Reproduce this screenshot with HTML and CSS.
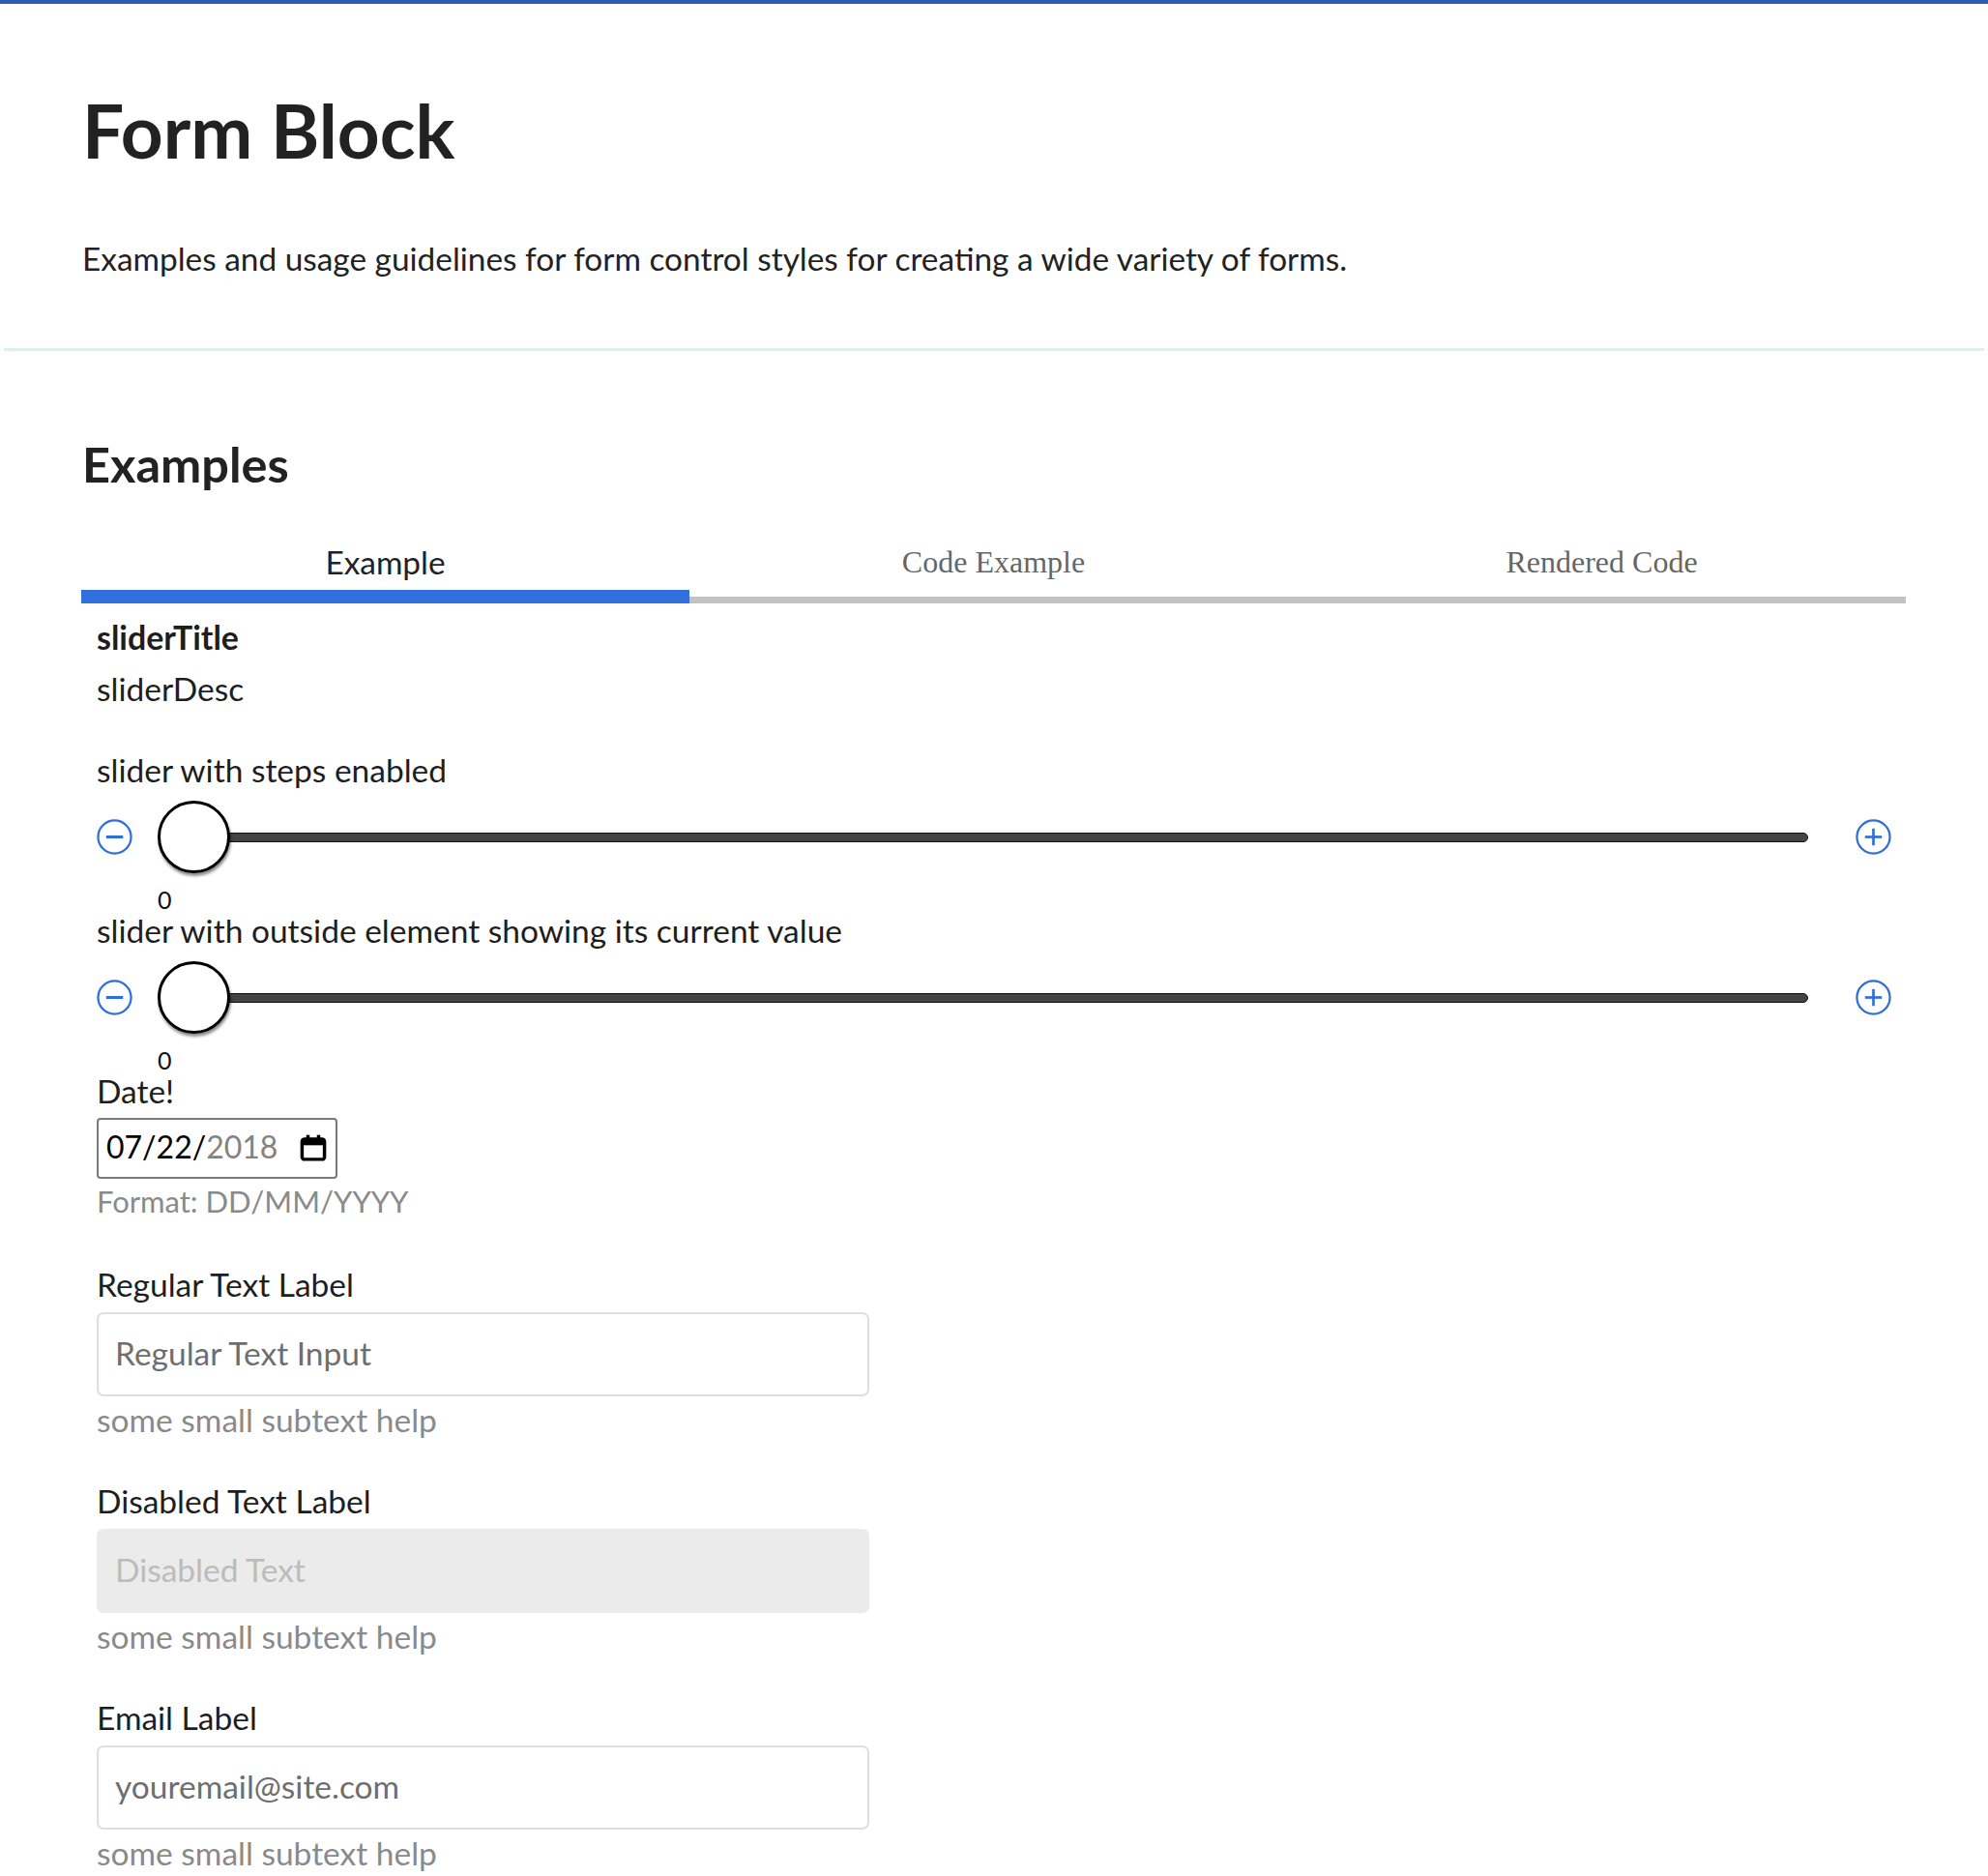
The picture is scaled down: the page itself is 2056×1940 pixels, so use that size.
FILE: index.html
```html
<!DOCTYPE html>
<html lang="en">
<head>
<meta charset="utf-8">
<title>Form Block</title>
<link rel="stylesheet" href="styles.css">
</head>
<body>
<header class="page-header">
  <h1 class="page-title">Form Block</h1>
  <p class="page-lead">Examples and usage guidelines for form control styles for creating a wide variety of forms.</p>
</header>
<hr class="divider">
<main class="content">
  <h2 class="section-title">Examples</h2>
  <nav class="tabs">
    <div class="tab tab-active">Example</div>
    <div class="tab tab-serif">Code Example</div>
    <div class="tab tab-serif">Rendered Code</div>
  </nav>
  <section class="panel">
    <div class="slider-title">sliderTitle</div>
    <div class="slider-desc">sliderDesc</div>

    <div class="field-label slider-label">slider with steps enabled</div>
    <div class="slider-row">
      <svg class="step-icon" viewBox="0 0 36 36"><circle cx="18" cy="18" r="16.6" fill="none" stroke="#2f6fdb" stroke-width="2.2"/><line x1="9.5" y1="18" x2="26.5" y2="18" stroke="#2f6fdb" stroke-width="3"/></svg>
      <div class="slider">
        <div class="thumb"></div>
        <div class="track"></div>
      </div>
      <svg class="step-icon" viewBox="0 0 36 36"><circle cx="18" cy="18" r="16.6" fill="none" stroke="#2f6fdb" stroke-width="2.2"/><line x1="9.5" y1="18" x2="26.5" y2="18" stroke="#2f6fdb" stroke-width="2.6"/><line x1="18" y1="9.5" x2="18" y2="26.5" stroke="#2f6fdb" stroke-width="2.6"/></svg>
    </div>
    <div class="slider-value">0</div>

    <div class="field-label">slider with outside element showing its current value</div>
    <div class="slider-row">
      <svg class="step-icon" viewBox="0 0 36 36"><circle cx="18" cy="18" r="16.6" fill="none" stroke="#2f6fdb" stroke-width="2.2"/><line x1="9.5" y1="18" x2="26.5" y2="18" stroke="#2f6fdb" stroke-width="3"/></svg>
      <div class="slider">
        <div class="thumb"></div>
        <div class="track"></div>
      </div>
      <svg class="step-icon" viewBox="0 0 36 36"><circle cx="18" cy="18" r="16.6" fill="none" stroke="#2f6fdb" stroke-width="2.2"/><line x1="9.5" y1="18" x2="26.5" y2="18" stroke="#2f6fdb" stroke-width="2.6"/><line x1="18" y1="9.5" x2="18" y2="26.5" stroke="#2f6fdb" stroke-width="2.6"/></svg>
    </div>
    <div class="slider-value">0</div>

    <div class="field-label">Date!</div>
    <div class="date-input">
      <span class="date-text"><span class="date-set">07/22/</span><span class="date-unset">2018</span></span>
      <svg class="cal-icon" viewBox="0 0 24 24"><rect x="3.3" y="5.3" width="17.4" height="15.6" rx="1.8" fill="none" stroke="#000" stroke-width="2.6"/><rect x="3" y="5" width="18" height="5" fill="#000"/><rect x="6.6" y="2" width="2.6" height="4" fill="#000"/><rect x="14.8" y="2" width="2.6" height="4" fill="#000"/></svg>
    </div>
    <div class="help-text format-text">Format: DD/MM/YYYY</div>

    <div class="form-group">
      <div class="field-label">Regular Text Label</div>
      <div class="text-input"><span class="placeholder">Regular Text Input</span></div>
      <div class="help-text">some small subtext help</div>
    </div>

    <div class="form-group">
      <div class="field-label">Disabled Text Label</div>
      <div class="text-input text-input-disabled"><span class="placeholder">Disabled Text</span></div>
      <div class="help-text">some small subtext help</div>
    </div>

    <div class="form-group">
      <div class="field-label">Email Label</div>
      <div class="text-input"><span class="placeholder">youremail@site.com</span></div>
      <div class="help-text">some small subtext help</div>
    </div>
  </section>
</main>
</body>
</html>
```
FILE: styles.css
```css
* { box-sizing: border-box; }

body {
  margin: 0;
  border-top: 4px solid #2b5eb3;
  font-family: "Lato", "Noto Sans", sans-serif;
  color: #222;
  background: #fff;
}

.page-header {
  padding: 85px 85px 0 85px;
}

.page-title {
  margin: 0;
  font-size: 76.5px;
  line-height: 90px;
  font-weight: 700;
  color: #222;
}

.page-lead {
  margin: 66px 0 0 0;
  font-size: 33.4px;
  line-height: 44px;
  color: #222;
}

.divider {
  margin: 71px 4px 0 4px;
  border: 0;
  height: 3px;
  background: #dcefed;
}

.content {
  padding: 0 85px 0 84px;
}

.section-title {
  margin: 87px 0 0 1px;
  font-size: 50.5px;
  line-height: 60px;
  font-weight: 700;
  color: #222;
}

.tabs {
  display: flex;
  margin-top: 51px;
}

.tab {
  flex: 1;
  text-align: center;
  font-size: 33.4px;
  line-height: 40px;
  padding-bottom: 16px;
  border-bottom: 7px solid #c2c2c2;
  color: #222;
}

.tab-active {
  padding-bottom: 9px;
  border-bottom: 14px solid #3170dc;
}

.tab-serif {
  font-family: "Liberation Serif", serif;
  font-size: 32px;
  color: #666;
}

.panel {
  padding: 15px 15px 0 16px;
  font-size: 33.5px;
  line-height: 40px;
  color: #1e1e1e;
}

.slider-title {
  font-weight: 700;
  font-size: 33.9px;
}

.slider-desc {
  margin-top: 13px;
}

.slider-label {
  margin-top: 44px;
}

.slider-row {
  display: flex;
  align-items: center;
  margin-top: 12px;
}

.step-icon {
  width: 37px;
  height: 37px;
  flex: none;
}

.slider {
  flex: 1;
  display: flex;
  align-items: center;
  margin: 0 49px 0 26px;
}

.thumb {
  position: relative;
  z-index: 1;
  flex: none;
  width: 75px;
  height: 75px;
  border-radius: 50%;
  background: #fff;
  border: 3px solid #000;
  box-shadow: 1px 3px 3px rgba(0, 0, 0, 0.45);
}

.track {
  flex: 1;
  height: 10px;
  margin-left: -40px;
  background: #444;
  border: 1px solid #111;
  border-radius: 5px;
}

.slider-value {
  margin: 15px 0 0 63px;
  font-size: 25px;
  line-height: 24px;
  color: #111;
}

.date-input {
  display: flex;
  align-items: center;
  justify-content: space-between;
  width: 249px;
  height: 63px;
  margin-top: 8px;
  padding: 0 7px 4px 8px;
  border: 2px solid #7a7a7a;
  border-radius: 4px;
  font-size: 32px;
}

.date-set { color: #000; }
.date-unset { color: #828282; }

.cal-icon {
  width: 32px;
  height: 32px;
  margin-top: 3px;
}

.help-text {
  margin-top: 2px;
  color: #8a8a8a;
}

.format-text {
  margin-top: 3px;
  font-size: 31px;
}

.form-group {
  margin-top: 46px;
}

.form-group + .form-group {
  margin-top: 44px;
}

.field-label {
  color: #1e1e1e;
}

.form-group .field-label {
  margin-bottom: 9px;
}

.text-input {
  display: flex;
  align-items: center;
  width: 799px;
  height: 87px;
  padding: 0 17px 4px 17px;
  border: 2px solid #dedede;
  border-radius: 7px;
  background: #fff;
}

.form-group .help-text {
  margin-top: 4px;
}

.placeholder {
  color: #6e6e6e;
}

.text-input-disabled {
  background: #ebebeb;
  border-color: #ebebeb;
}

.text-input-disabled .placeholder {
  color: #bcbcbc;
}
```
